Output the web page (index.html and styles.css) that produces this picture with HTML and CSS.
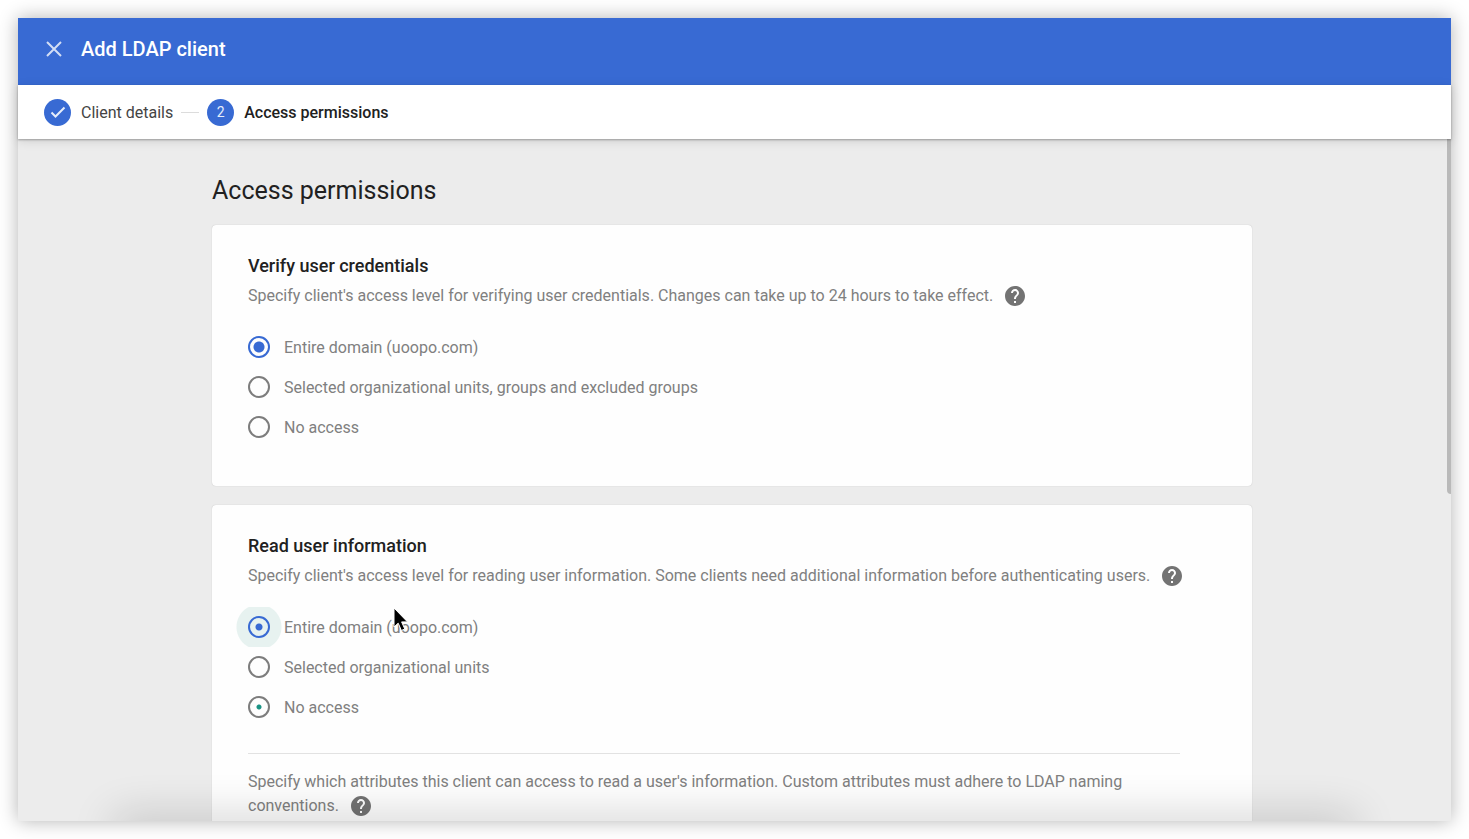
FILE: index.html
```html
<!DOCTYPE html>
<html lang="en">
<head>
    <meta charset="UTF-8">
    <meta name="viewport" content="width=device-width, initial-scale=1.0">
    <title>Add LDAP client</title>
    <link rel="stylesheet" href="styles.css">
</head>
<body>
    <div class="dialog">
        <header class="dialog-header">
            <button type="button" class="close-btn" aria-label="Close">
                <svg width="16" height="16" viewBox="0 0 16 16"><path d="M1 1L15 15M15 1L1 15" stroke="currentColor" stroke-width="2" fill="none"/></svg>
            </button>
            <h1>Add LDAP client</h1>
        </header>

        <ol class="stepper">
            <li class="step">
                <span class="step-badge">
                    <svg width="18" height="18" viewBox="0 0 18 18"><path d="M2.500 9.500L6.500 13.500L15.500 4.500" stroke="currentColor" stroke-width="2" fill="none"/></svg>
                </span>
                <span>Client details</span>
            </li>
            <li class="step-line" aria-hidden="true"></li>
            <li class="step active" aria-current="step">
                <span class="step-badge">2</span>
                <span>Access permissions</span>
            </li>
        </ol>

        <main class="content">
            <form class="content-inner">
                <h2>Access permissions</h2>

                <section class="card">
                    <h3>Verify user credentials</h3>
                    <p>Specify client's access level for verifying user credentials. Changes can take up to 24 hours to take effect.
                        <button type="button" class="help-btn" aria-label="Help">
                            <svg width="20" height="20" viewBox="2 2 20 20"><path fill="currentColor" d="M12 2C6.480 2 2 6.480 2 12s4.480 10 10 10 10-4.480 10-10S17.520 2 12 2zm1 17h-2v-2h2v2zm2.070-7.750l-.9.920C13.450 12.900 13 13.500 13 15h-2v-.5c0-1.100.450-2.100 1.170-2.830l1.240-1.260c.370-.360.590-.860.590-1.410 0-1.100-.9-2-2-2s-2 .9-2 2H8c0-2.210 1.790-4 4-4s4 1.790 4 4c0 .880-.360 1.680-.930 2.250z"/></svg>
                        </button>
                    </p>
                    <div class="options" role="radiogroup" aria-label="Verify user credentials">
                        <label class="option"><input type="radio" name="verify" checked>Entire domain (uoopo.com)</label>
                        <label class="option"><input type="radio" name="verify">Selected organizational units, groups and excluded groups</label>
                        <label class="option"><input type="radio" name="verify">No access</label>
                    </div>
                </section>

                <section class="card">
                    <h3>Read user information</h3>
                    <p>Specify client's access level for reading user information. Some clients need additional information before authenticating users.
                        <button type="button" class="help-btn" aria-label="Help">
                            <svg width="20" height="20" viewBox="2 2 20 20"><path fill="currentColor" d="M12 2C6.480 2 2 6.480 2 12s4.480 10 10 10 10-4.480 10-10S17.520 2 12 2zm1 17h-2v-2h2v2zm2.070-7.750l-.9.920C13.450 12.900 13 13.500 13 15h-2v-.5c0-1.100.450-2.100 1.170-2.830l1.240-1.260c.370-.360.590-.860.590-1.410 0-1.100-.9-2-2-2s-2 .9-2 2H8c0-2.210 1.790-4 4-4s4 1.790 4 4c0 .880-.360 1.680-.930 2.250z"/></svg>
                        </button>
                    </p>
                    <div class="options" role="radiogroup" aria-label="Read user information">
                        <label class="option pressed"><input type="radio" name="read" checked>Entire domain (uoopo.com)
                            <svg class="pointer" width="16" height="26" viewBox="0 0 16 26"><path d="M1 1V20L5.200 16.200L8.400 23.500L11.800 22L8.600 14.900H14.500Z" fill="#000" stroke="#fff" stroke-width="1"/></svg>
                        </label>
                        <label class="option"><input type="radio" name="read">Selected organizational units</label>
                        <label class="option leaving"><input type="radio" name="read">No access</label>
                    </div>
                    <div class="attributes">
                        <p>Specify which attributes this client can access to read a user's information. Custom attributes must adhere to LDAP naming conventions.
                            <button type="button" class="help-btn" aria-label="Help">
                                <svg width="20" height="20" viewBox="2 2 20 20"><path fill="currentColor" d="M12 2C6.480 2 2 6.480 2 12s4.480 10 10 10 10-4.480 10-10S17.520 2 12 2zm1 17h-2v-2h2v2zm2.070-7.750l-.9.920C13.450 12.900 13 13.500 13 15h-2v-.5c0-1.100.450-2.100 1.170-2.830l1.240-1.260c.370-.360.590-.860.590-1.410 0-1.100-.9-2-2-2s-2 .9-2 2H8c0-2.210 1.790-4 4-4s4 1.790 4 4c0 .880-.360 1.680-.930 2.250z"/></svg>
                            </button>
                        </p>
                    </div>
                </section>
            </form>
            <div class="scroll-thumb"></div>
        </main>
    </div>
</body>
</html>
```
FILE: styles.css
```css
* {
    box-sizing: border-box;
}

body {
    margin: 0;
    padding: 18px;
    height: 100vh;
    background-color: #fff;
    font-family: Roboto, Arial, sans-serif;
    font-size: 16px;
    color: #212121;
    overflow: hidden;
}

h1, h2, h3, p, ol {
    margin: 0;
    padding: 0;
}

button {
    padding: 0;
    border: none;
    background: none;
    cursor: pointer;
}

svg {
    display: block;
}

.dialog {
    height: 100%;
    display: flex;
    flex-direction: column;
    box-shadow: 0 0 18px rgba(0, 0, 0, 0.3);
}

.dialog-header {
    flex: none;
    height: 67px;
    padding: 0 28px 5px;
    display: flex;
    align-items: center;
    gap: 19px;
    background-color: #386ad3;
    color: #fff;
}

.dialog-header h1 {
    font-size: 20px;
    font-weight: 500;
}

.close-btn {
    color: #d3def5;
}

/* Steps */
.stepper {
    flex: none;
    position: relative;
    z-index: 1;
    height: 54px;
    padding: 0 26px;
    display: flex;
    align-items: center;
    gap: 8px;
    list-style: none;
    background-color: #fff;
    box-shadow: 0 1px 2px rgba(0, 0, 0, 0.3), 0 2px 10px rgba(0, 0, 0, 0.12);
}

.step {
    display: flex;
    align-items: center;
    gap: 10px;
    color: #444;
}

.step.active {
    color: #212121;
    font-weight: 500;
}

.step-badge {
    width: 27px;
    height: 27px;
    display: flex;
    align-items: center;
    justify-content: center;
    border-radius: 50%;
    background-color: #386ad3;
    color: #e6edfa;
    font-size: 14px;
    font-weight: 400;
}

.step-line {
    width: 18px;
    height: 1px;
    background-color: #dcdcdc;
}

/* Scrolling area */
.content {
    flex: 1;
    min-height: 0;
    position: relative;
    overflow: hidden;
    padding: 36px 5px 0 0;
    background-color: #ececec;
}

.content::after {
    content: "";
    position: absolute;
    top: 100%;
    left: 100px;
    right: 100px;
    height: 20px;
    box-shadow: 0 0 44px 4px rgba(0, 0, 0, 0.2);
}

.scroll-thumb {
    position: absolute;
    top: 0;
    right: 0;
    width: 4px;
    height: 52%;
    border-radius: 0 0 0 4px;
    background-color: #b9b9b9;
}

.content-inner {
    max-width: 1040px;
    margin: 0 auto;
}

h2 {
    margin-bottom: 18px;
    font-size: 25px;
    line-height: 32px;
    font-weight: 400;
}

.card {
    margin-bottom: 19px;
    padding: 29px 36px 39px;
    border-radius: 4px;
    background-color: #fefefe;
    box-shadow: 0 0 1px rgba(0, 0, 0, 0.25);
}

h3 {
    margin-bottom: 6px;
    font-size: 18px;
    line-height: 24px;
    font-weight: 500;
}

.card p {
    line-height: 24px;
    color: #808080;
}

.help-btn {
    margin: -2px 0 0 8px;
    color: #737373;
    vertical-align: middle;
}

.options {
    margin-top: 19px;
}

.option {
    position: relative;
    width: fit-content;
    height: 40px;
    display: flex;
    align-items: center;
    color: #808080;
}

.option input {
    appearance: none;
    position: relative;
    width: 22px;
    height: 22px;
    margin: 0 14px 0 0;
    border: 2px solid #7d7d7d;
    border-radius: 50%;
}

.option input:checked {
    border-color: #386ad3;
    background: radial-gradient(circle, #386ad3 5px, transparent 6px);
}

.option.pressed input:checked {
    background: radial-gradient(circle, #386ad3 3px, transparent 4px);
}

.option.leaving input {
    background: radial-gradient(circle, #1a9384 2px, transparent 3px);
}

.option.pressed::before {
    content: "";
    position: absolute;
    left: -12px;
    width: 46px;
    height: 40px;
    background: radial-gradient(circle, #e7f2f0 22px, transparent 23px);
}

.pointer {
    position: absolute;
    top: 0;
    left: 145px;
}

.attributes {
    margin: 26px 36px 0 0;
    padding-top: 16px;
    border-top: 1px solid #e2e2e2;
}
```
